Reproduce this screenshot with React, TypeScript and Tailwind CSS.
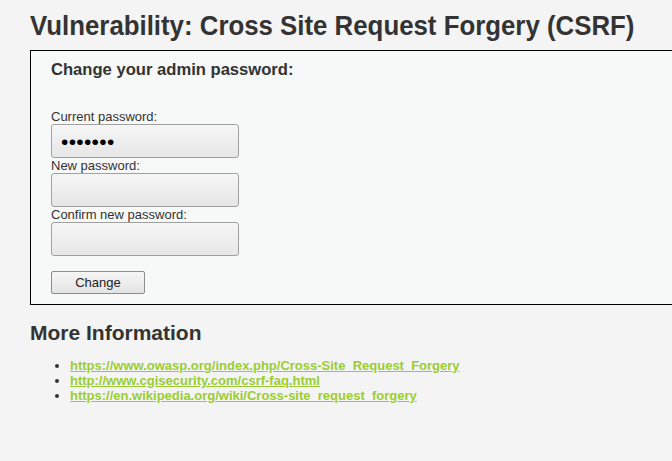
export default function App() {
  const fields = [
    { label: 'Current password:', value: '•••••••' },
    { label: 'New password:', value: '' },
    { label: 'Confirm new password:', value: '' },
  ];

  const links = [
    'https://www.owasp.org/index.php/Cross-Site_Request_Forgery',
    'http://www.cgisecurity.com/csrf-faq.html',
    'https://en.wikipedia.org/wiki/Cross-site_request_forgery',
  ];

  return (
    <div className="min-h-[461px] w-[672px] overflow-hidden bg-[#f4f4f4] pl-[30px] font-['Liberation_Sans',Arial,sans-serif] text-[13px] text-[#333]">
      <h1 className="origin-left scale-x-[0.922] whitespace-nowrap pt-[10px] text-[28px] font-bold leading-[32px] text-[#333]">
        Vulnerability: Cross Site Request Forgery (CSRF)
      </h1>

      <div className="mt-[8px] w-[660px] border border-black bg-[#f7f8f8] pb-[10px] pl-[20px] pt-[9px]">
        <h3 className="text-[16.6px] font-bold leading-[20px] text-[#333]">Change your admin password:</h3>
        <div className="mt-[29px] flex flex-col">
          {fields.map((f) => (
            <div key={f.label} className="flex flex-col">
              <label className="leading-[15px] text-[#333]">{f.label}</label>
              <div className="flex h-[34px] w-[188px] items-center rounded-[3px] border border-[#a0a0a0] bg-[linear-gradient(180deg,#f6f6f6,#e6e6e6)] pl-[9px] text-[21px] leading-none tracking-[0.3px] text-black">
                {f.value}
              </div>
            </div>
          ))}
        </div>
        <button
          type="button"
          className="mt-[15px] h-[23px] w-[94px] rounded-[2px] border border-[#8c8c8c] bg-[linear-gradient(180deg,#f6f6f6,#e4e4e4)] text-[13px] text-[#222]"
        >
          Change
        </button>
      </div>

      <h2 className="mt-[16px] text-[21px] font-bold leading-[24px] text-[#333]">More Information</h2>
      <ul className="mt-[13px] list-disc pl-[40px] text-[#333]">
        {links.map((l) => (
          <li key={l} className="leading-[15px]">
            <a href="#" className="font-bold text-[#9acd32] underline">
              {l}
            </a>
          </li>
        ))}
      </ul>
    </div>
  );
}
